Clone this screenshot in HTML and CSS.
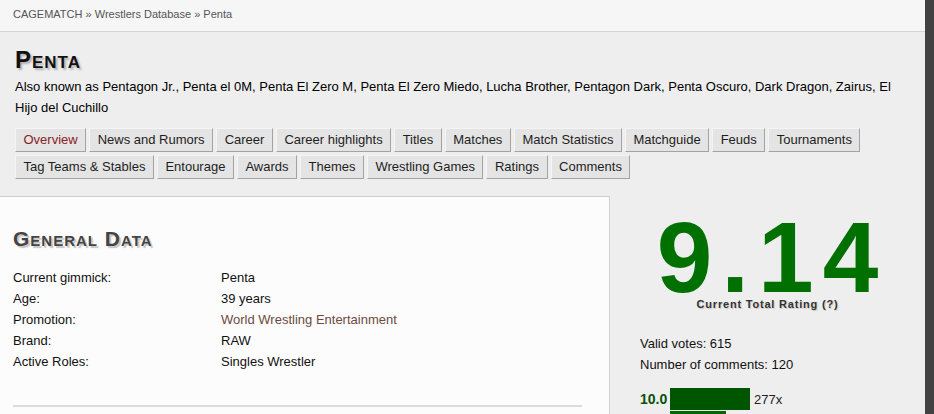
FILE: index.html
```html
<!DOCTYPE html>
<html lang="en">
<head>
<meta charset="utf-8">
<title>Penta - CAGEMATCH</title>
<link rel="stylesheet" href="styles.css">
</head>
<body>
<div class="page">
  <header class="crumbs">
    <a href="#">CAGEMATCH</a> &raquo; <a href="#">Wrestlers Database</a> &raquo; <a href="#">Penta</a>
  </header>
  <div class="intro">
    <h1 class="title">Penta</h1>
    <p class="aka">Also known as Pentagon Jr., Penta el 0M, Penta El Zero M, Penta El Zero Miedo, Lucha Brother, Pentagon Dark, Penta Oscuro, Dark Dragon, Zairus, El Hijo del Cuchillo</p>
    <nav class="tabs">
      <a class="tab active" href="#">Overview</a>
      <a class="tab" href="#">News and Rumors</a>
      <a class="tab" href="#">Career</a>
      <a class="tab" href="#">Career highlights</a>
      <a class="tab" href="#">Titles</a>
      <a class="tab" href="#">Matches</a>
      <a class="tab" href="#">Match Statistics</a>
      <a class="tab" href="#">Matchguide</a>
      <a class="tab" href="#">Feuds</a>
      <a class="tab" href="#">Tournaments</a>
      <a class="tab" href="#">Tag Teams &amp; Stables</a>
      <a class="tab" href="#">Entourage</a>
      <a class="tab" href="#">Awards</a>
      <a class="tab" href="#">Themes</a>
      <a class="tab" href="#">Wrestling Games</a>
      <a class="tab" href="#">Ratings</a>
      <a class="tab" href="#">Comments</a>
    </nav>
  </div>
  <div class="main">
    <section class="panel">
      <h2 class="section-title">General Data</h2>
      <div class="data">
        <div class="label">Current gimmick:</div><div class="value">Penta</div>
        <div class="label">Age:</div><div class="value">39 years</div>
        <div class="label">Promotion:</div><div class="value"><a class="link" href="#">World Wrestling Entertainment</a></div>
        <div class="label">Brand:</div><div class="value">RAW</div>
        <div class="label">Active Roles:</div><div class="value">Singles Wrestler</div>
      </div>
      <hr class="rule">
    </section>
    <aside class="rating">
      <div class="score">9.14</div>
      <div class="score-label">Current Total Rating (?)</div>
      <div class="stats">
        <div>Valid votes: 615</div>
        <div>Number of comments: 120</div>
      </div>
      <div class="bars">
        <div class="bar-row"><span class="bar-label">10.0</span><span class="bar b10" style="width:80px"></span><span class="bar-count">277x</span></div>
        <div class="bar-row"><span class="bar-label">9.0</span><span class="bar b9" style="width:56px"></span><span class="bar-count">190x</span></div>
        <div class="bar-row"><span class="bar-label">8.0</span><span class="bar b8" style="width:30px"></span><span class="bar-count">90x</span></div>
      </div>
    </aside>
  </div>
</div>
<div class="scroll"></div>
</body>
</html>
```

FILE: styles.css
```css
* { box-sizing: border-box; }

html, body {
  margin: 0;
  padding: 0;
  height: 100%;
}

body {
  display: flex;
  background: #eeeeee;
  font-family: "Liberation Sans", Arial, sans-serif;
  font-size: 13px;
  color: #111;
  overflow: hidden;
}

a { text-decoration: none; color: inherit; }

.page {
  flex: 1;
  min-width: 0;
}

.scroll {
  width: 9px;
  flex: none;
  background: #424242;
}

.crumbs {
  height: 32px;
  background: #f6f6f6;
  border-bottom: 1px solid #d4d4d4;
  padding: 0 13px;
  font-size: 11px;
  line-height: 29px;
  color: #555;
}

.intro {
  padding: 14px 30px 0 15px;
}

.title {
  margin: 0;
  font-size: 24px;
  line-height: 28px;
  font-weight: bold;
  font-variant: small-caps;
  letter-spacing: 1px;
  color: #111;
  text-shadow: 2px 2px 2px #b0b0b0;
}

.aka {
  margin: 2px 0 0;
  line-height: 21px;
  color: #000;
}

.tabs {
  margin-top: 10px;
  display: flex;
  flex-wrap: wrap;
  gap: 3px 3px;
}

.tab {
  display: block;
  height: 24px;
  line-height: 22px;
  padding: 0 7.5px;
  background: #e4e4e4;
  border: 1px solid;
  border-color: #f4f4f4 #a3a3a3 #a3a3a3 #f4f4f4;
  color: #1e1e1e;
}

.tab.active { color: #8b1c24; }

.main {
  margin-top: 17px;
  display: flex;
  align-items: stretch;
}

.panel {
  width: 610px;
  flex: none;
  background: #fcfcfc;
  border-top: 1px solid #cfcfcf;
  border-right: 1px solid #d6d0d0;
  padding: 30px 28px 0 13px;
}

.section-title {
  margin: 0;
  font-size: 21px;
  line-height: 24px;
  font-weight: bold;
  font-variant: small-caps;
  letter-spacing: 1px;
  color: #444;
  text-shadow: 2px 2px 1px #c4c4c4;
}

.data {
  margin-top: 16px;
  display: grid;
  grid-template-columns: 208px 1fr;
  line-height: 21px;
}

.link { color: #6e4a3e; }

.rule {
  margin: 33px 0 0;
  border: 0;
  border-top: 2px solid #dcdcdc;
  width: 569px;
}

.rating {
  flex: 1;
  padding: 21px 0 0 30px;
}

.score {
  margin-left: -30px;
  text-align: center;
  font-size: 100px;
  line-height: 80px;
  font-weight: bold;
  letter-spacing: 9px;
  padding-left: 9px;
  color: #007000;
}

.score-label {
  margin-left: -30px;
  text-align: center;
  font-size: 11px;
  line-height: 14px;
  font-weight: bold;
  letter-spacing: 0.8px;
  color: #333;
  text-shadow: 1px 1px 1px #c8c8c8;
}

.stats {
  margin-top: 22px;
  line-height: 21px;
}

.bars {
  margin-top: 13px;
  display: flex;
  flex-direction: column;
  gap: 1px;
}

.bar-row {
  display: flex;
  align-items: center;
  height: 22px;
}

.bar-label {
  width: 30px;
  font-size: 14px;
  font-weight: bold;
  color: #0a500a;
}

.bar {
  display: block;
  height: 22px;
}

.b10 { background: #005500; }
.b9 { background: #006800; }
.b8 { background: #007a00; }

.bar-count {
  margin-left: 4px;
  color: #222;
}
```
